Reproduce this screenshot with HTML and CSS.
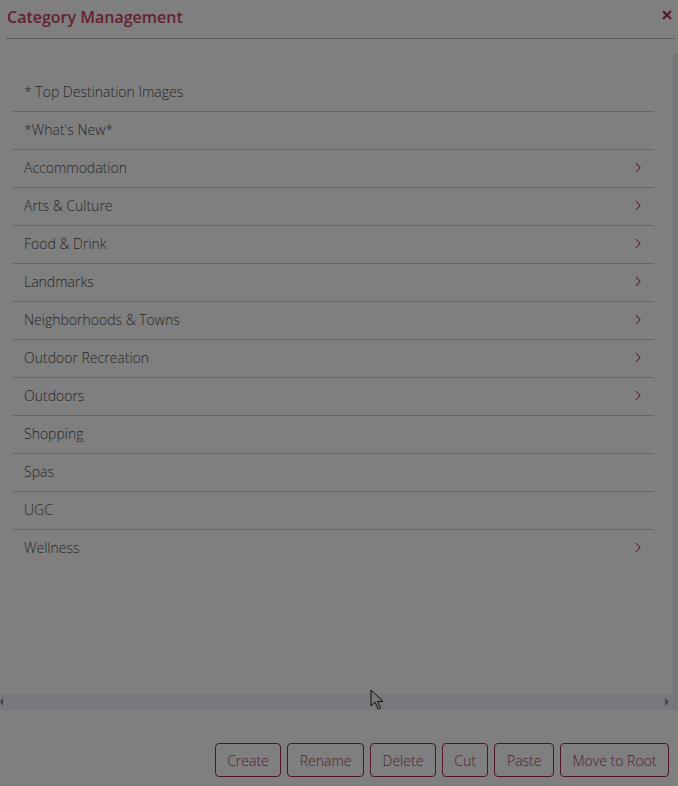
FILE: index.html
```html
<!DOCTYPE html>
<html lang="en">
<head>
    <meta charset="UTF-8">
    <meta name="viewport" content="width=device-width, initial-scale=1.0">
    <title>Category Management</title>
    <link rel="stylesheet" href="styles.css">
</head>
<body>
    <div class="dialog">
        <div class="dialog-head">
            <h2>Category Management</h2>
            <span class="close">
                <svg width="10" height="10" viewBox="0 0 10 10"><path d="M1 1L9 9M9 1L1 9" stroke="currentColor" stroke-width="2"/></svg>
            </span>
        </div>

        <div class="dialog-body">
            <div class="pane">
                <ul class="tree">
                    <li class="node">* Top Destination Images</li>
                    <li class="node">*What's New*</li>
                    <li class="node parent">Accommodation</li>
                    <li class="node parent">Arts &amp; Culture</li>
                    <li class="node parent">Food &amp; Drink</li>
                    <li class="node parent">Landmarks</li>
                    <li class="node parent">Neighborhoods &amp; Towns</li>
                    <li class="node parent">Outdoor Recreation</li>
                    <li class="node parent">Outdoors</li>
                    <li class="node">Shopping</li>
                    <li class="node">Spas</li>
                    <li class="node">UGC</li>
                    <li class="node parent">Wellness</li>
                </ul>
                <div class="hscroll">
                    <span class="arrow left"></span>
                    <span class="arrow right"></span>
                </div>
            </div>
            <div class="vscroll"></div>
        </div>

        <div class="actions">
            <button class="btn">Create</button>
            <button class="btn">Rename</button>
            <button class="btn">Delete</button>
            <button class="btn">Cut</button>
            <button class="btn">Paste</button>
            <button class="btn">Move to Root</button>
        </div>
    </div>

    <svg class="cursor" width="14" height="22" viewBox="0 0 14 22">
        <path d="M1 1L1 17L5 13L8 20L10.5 19L7.5 12.5L13 12.5Z" fill="#777" stroke="#111" stroke-width="1"/>
    </svg>
</body>
</html>
```

FILE: styles.css
```css
body {
    margin: 0;
    background: #7f7f7f;
    font-family: "Open Sans", "Noto Sans", sans-serif;
    color: #262626;
}
.dialog {
    width: 678px;
    height: 786px;
    display: flex;
    flex-direction: column;
    position: relative;
}
.dialog-head {
    display: flex;
    justify-content: space-between;
    align-items: flex-start;
    height: 39px;
    margin: 0 4px 0 7px;
    border-bottom: 1px dotted #3a3a3a;
    box-sizing: border-box;
}
.dialog-head h2 {
    margin: 6px 0 0;
    font-size: 16px;
    font-weight: 600;
    color: #62222f;
    line-height: 22px;
}
.close {
    color: #561826;
    margin-top: 10px;
    margin-right: 2px;
    line-height: 0;
}
.dialog-body {
    display: flex;
    height: 671px;
}
.pane {
    flex: 1;
    display: flex;
    flex-direction: column;
}
.tree {
    flex: 1;
    list-style: none;
    margin: 0;
    padding: 34px 19px 0 12px;
}
.node {
    box-sizing: border-box;
    height: 38px;
    font-size: 14px;
    font-weight: 300;
    padding: 0 13px 2px 12px;
    border-top: 1px solid #666;
    display: flex;
    justify-content: space-between;
    align-items: center;
}
.node:first-child {
    border-top: none;
}
.node.parent::after {
    content: "";
    width: 6px;
    height: 11px;
    background: url("data:image/svg+xml;utf8,<svg xmlns='http://www.w3.org/2000/svg' width='6' height='11' viewBox='0 0 6 11'><path d='M1 1L5 5.5L1 10' fill='none' stroke='%23591c2b' stroke-width='1.1'/></svg>") no-repeat;
}
.hscroll {
    height: 16px;
    background: #78787c;
    display: flex;
    justify-content: space-between;
    align-items: center;
}
.arrow {
    width: 0;
    height: 0;
    border-top: 4px solid transparent;
    border-bottom: 4px solid transparent;
}
.arrow.left {
    border-right: 3px solid #444;
}
.arrow.right {
    border-left: 4px solid #4a4a4a;
    margin-right: 4px;
}
.vscroll {
    width: 5px;
    margin-top: 15px;
    background: #767679;
}
.actions {
    display: flex;
    justify-content: flex-end;
    gap: 6px;
    padding: 33px 9px 0 0;
}
.btn {
    height: 34px;
    padding: 0 11.5px;
    background: transparent;
    border: 1px solid #4e1522;
    border-radius: 4px;
    font-family: "Open Sans", "Noto Sans", sans-serif;
    font-size: 14px;
    font-weight: 300;
    color: #51202d;
}
.cursor {
    position: absolute;
    left: 370px;
    top: 689px;
}
```
